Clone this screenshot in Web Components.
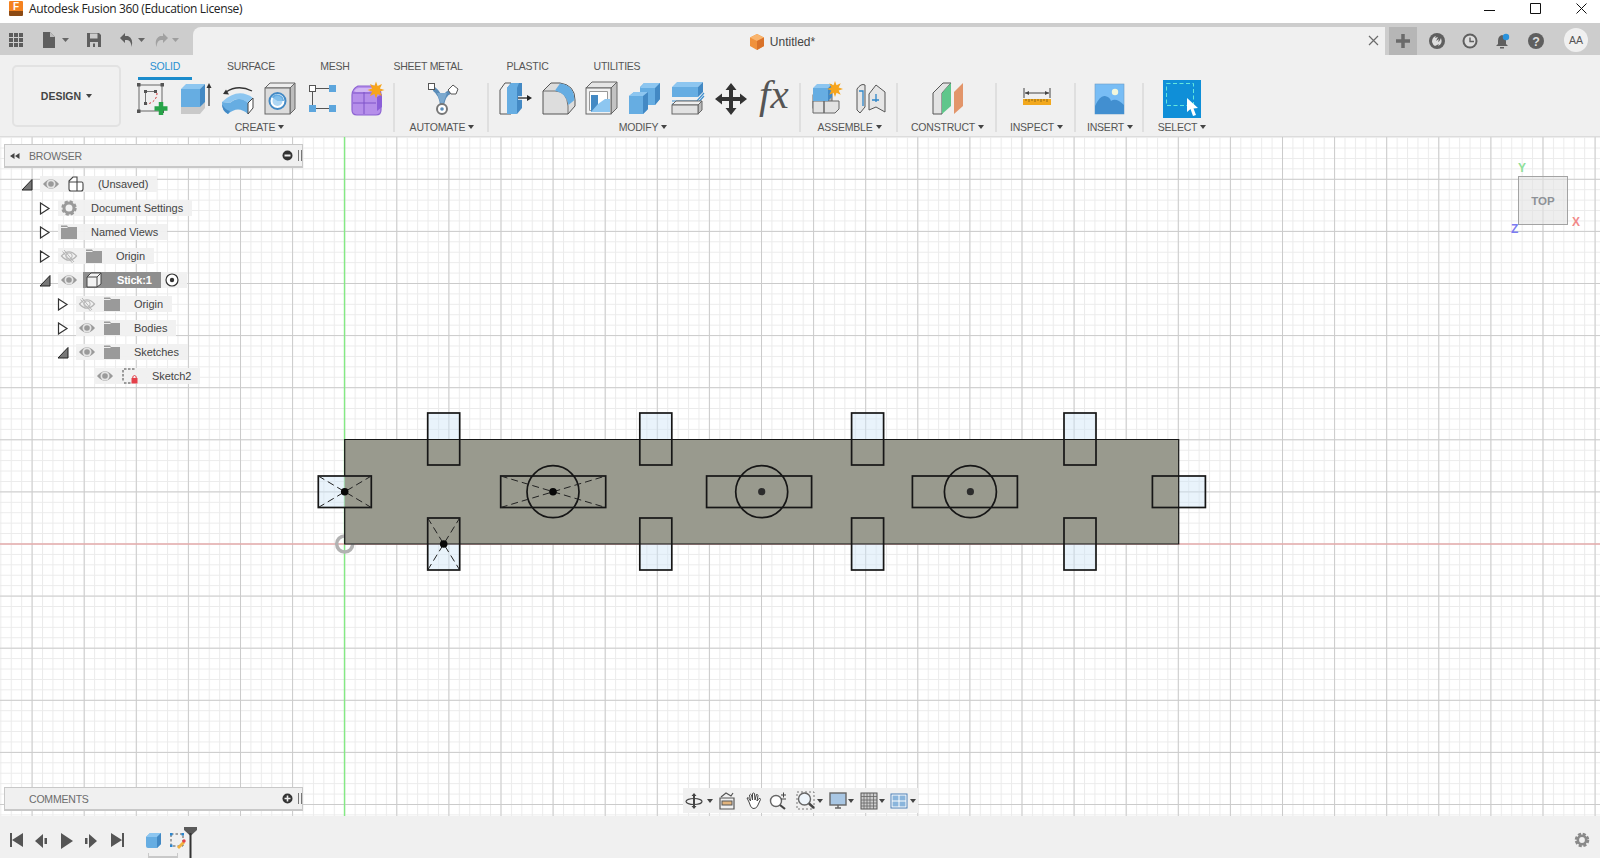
<!DOCTYPE html>
<html>
<head>
<meta charset="utf-8">
<title>Autodesk Fusion 360</title>
<style>
  html,body{ margin:0; padding:0; height:100%; overflow:hidden; background:#fff; }
</style>
</head>
<body>
<fusion-app></fusion-app>
<script>
const BLUE='#66ade2', BLUE_D='#4389c4', BLUE_L='#8dc6f0', EDGE='#555';
const cube=(x,y,w,h,d,front=BLUE,top=BLUE_L,side=BLUE_D,st='none')=>
  `<path fill="${top}" stroke="${st}" d="M${x} ${y}l${d} ${-d}h${w}l${-d} ${d}z"/><path fill="${side}" stroke="${st}" d="M${x+w} ${y}l${d} ${-d}v${h}l${-d} ${d}z"/><rect fill="${front}" stroke="${st}" x="${x}" y="${y}" width="${w}" height="${h}"/>`;
const star=(cx,cy,r)=>{let p='';for(let i=0;i<16;i++){const a=i*Math.PI/8,q=i%2?r*.5:r;p+=`${(cx+q*Math.cos(a)).toFixed(1)},${(cy+q*Math.sin(a)).toFixed(1)} `}return `<polygon points="${p}" fill="#f7a51c"/>`};

const ICONS={
  // ribbon, 38 x 38
  sketch:`<path d="M6 5H29V31H6Z" fill="none" stroke="#666"/><g fill="#555"><rect x="4" y="3" width="3.5" height="3.5"/><rect x="27.500" y="3" width="3.500" height="3.500"/><rect x="4" y="29.500" width="3.500" height="3.500"/><rect x="27.500" y="29.500" width="3.500" height="3.500"/><rect x="11" y="10" width="3" height="3"/><rect x="21" y="10" width="3" height="3"/><rect x="11" y="22" width="3" height="3"/></g><path d="M14 11.500H21M12.500 13V22" stroke="#777" fill="none"/><path d="M24 13C24 19 20 23 14 24" stroke="#c33" stroke-dasharray="2 2" fill="none"/><path d="M28 22V35M21.500 28.500H34.500" stroke="#27a348" stroke-width="4.500"/>`,
  extrude:`<path fill="#c9c9c9" d="M5 27H24L29 21V28L24 34H5Z"/>${cube(5,9,19,18,5)}<path d="M33 7V26" stroke="#333" stroke-width="1.200"/><path fill="#333" d="M33 3L30.500 8H35.500Z"/>`,
  revolve:`<path d="M7 12Q19 4 33 11" fill="none" stroke="#333" stroke-width="1.300"/><path fill="#333" d="M4 14L10 14.500 7 9.500Z"/><path fill="${BLUE_L}" d="M3 22Q19 7 34 18L29 23Q19 15 11 23Z"/><path fill="${BLUE}" d="M3 22L11 23Q20 15 29 23V34Q19 25 9 34 3 31 3 22Z"/><path fill="${BLUE_D}" d="M3 24Q3 31 9 34L11 31Q6 30 3 24Z"/><path fill="#fff" stroke="#444" d="M29 23L34 18V28L29 34Z"/>`,
  hole:`${cube(3,8,25,26,5,'#dcdcdc','#eee','#bdbdbd','#666')}<circle cx="15.500" cy="21" r="8" fill="#fff" stroke="${BLUE_D}" stroke-width="2"/><path d="M15.500 21L9.500 17A7 7 0 0 1 22 21Z" fill="${BLUE}"/><circle cx="15.500" cy="21" r="5" fill="${BLUE_L}" opacity=".7"/>`,
  pattern:`<path d="M11 8.500H24M7.500 12V25M11 28.500H24" stroke="#555"/><rect x="4.500" y="5.500" width="6" height="6" fill="#fff" stroke="#555"/><g fill="#5da6dd"><rect x="24" y="5" width="7" height="7"/><rect x="4" y="25" width="7" height="7"/><rect x="24" y="25" width="7" height="7"/></g>`,
  form:`<path fill="#b68fea" stroke="#8c62d2" stroke-width="1.200" d="M4 15Q4 9 10 6H26Q33 8 33 14V30Q33 35 28 35H9Q4 35 4 30Z"/><path fill="#d1b6f3" d="M6 11Q8 8 11 8H25L21 12H8Z"/><path stroke="#7f52c9" fill="none" d="M5 23H28M16 12V34M5 13H28"/><path fill="#8c5fd8" d="M29 17L34 14V27L29 31Z"/>${star(28,10,8.500)}`,
  automate:`<path d="M11 9Q18 14 19 25M27 12Q21 14 19 25" stroke="#5a8cb8" stroke-width="4" fill="none"/><path d="M14 13H24L20 24H18Z" fill="#7ba9cf"/><rect x="5.500" y="3.500" width="6" height="6" fill="#fff" stroke="#555"/><path d="M30 5L35 9 33 14H28L25 10Z" fill="#fff" stroke="#555"/><circle cx="19" cy="29" r="5" fill="#fff" stroke="#777" stroke-width="2"/><circle cx="19" cy="29" r="1.800" fill="#5a8cb8"/>`,
  presspull:`<path d="M3 10L8 3H14V34H3Z" fill="#f0f0f0" stroke="#555"/><path d="M10 8L14 3H25V28L20 34H10Z" fill="${BLUE_D}"/><path d="M10 8L14 3H22L20 8V34H10Z" fill="${BLUE}"/><path d="M21 18H31" stroke="#fff" stroke-width="3.500"/><path d="M21 18H30" stroke="#222" stroke-width="1.300"/><path d="M35 18L30 15V21Z" fill="#222"/>`,
  fillet:`<path d="M3 11L11 3H20Q35 5 35 20V26L28 34H3Z" fill="#ddd" stroke="#555"/><path d="M3 11H15Q27 11 28 26V34" fill="none" stroke="#555" stroke-width=".800"/><path d="M20 3.500Q34 5 34.500 20L28.500 25Q27 14 15 10.500Z" fill="${BLUE}"/>`,
  shell:`${cube(3,8,25,26,6,'#f2f2f2','#e6e6e6','#c3c3c3','#666')}<path d="M6.500 11.500H24.500V30.500H6.500Z" fill="#fff" stroke="#999"/><path d="M8 15H15V24H27V32H8Z" fill="${BLUE_D}"/><path d="M15 24L22 19H27V24Z" fill="${BLUE_L}"/><path d="M8 32L15 24H27V32Z" fill="${BLUE_L}"/>`,
  combine:`<path d="M3 16L8 12H14V7L18 3H34V19L29 25H22V29L17 34H3Z" fill="${BLUE}"/><path d="M14 8H30L34 3H18Z M3 16H18L22 12H8Z" fill="${BLUE_L}"/><path d="M29 8L34 3V19L29 25Z M17 16L22 12V29L17 34Z" fill="${BLUE_D}"/>`,
  offset:`${cube(3,7,26,10,5)}<path d="M3 21L28 21 35 13M3 24H28L35 16" fill="none" stroke="#3d8fd0" stroke-width="1.200"/>${cube(3,25,26,9,4,'#e2e2e2','#eee','#bbb','#666')}`,
  move:`<path fill="#333" d="M19 3L24.500 10H21V17H28V13.500L35 19 28 24.500V21H21V28H24.500L19 35 13.500 28H17V21H10V24.500L3 19 10 13.500V17H17V10H13.500Z"/>`,
  fx:`<text x="4" y="28" font-family="'Liberation Serif',serif" font-style="italic" font-size="41" letter-spacing="0" fill="#555">fx</text>`,
  component:`${cube(4,15,15,13,4,'#e2e2e2','#efefef','#bbb','#666')}<path d="M4 33V21H15V33ZM15 33V21H30V29L26 33Z" fill="#e2e2e2" stroke="#666"/>${cube(4,8,15,13,4)}${star(26,9,8)}`,
  joint:`<path d="M5 9Q9 3 13 5V27L8 33 5 30Z" fill="#e6e6e6" stroke="#555"/><path d="M7 11H11V26" stroke="#2f86c9" fill="none" stroke-width="1.300"/><path d="M24 5L33 12V32L24 27 17 30V14Z" fill="#e6e6e6" stroke="#555"/><path d="M24 14V22M20 20H27" stroke="#2f86c9" fill="none" stroke-width="1.300"/>`,
  plane:`<path d="M4 13L14 3H22L13 13V34H4Z" fill="#e3e3e3" stroke="#555"/><path d="M13 13L22 3V26L13 34Z" fill="#5fc68b"/><path d="M25 12L34 3V26L25 34Z" fill="#e2956a"/>`,
  measure:`<path d="M6 8V18M32 8V18M7 13H31" stroke="#444" fill="none"/><path d="M7 13L11 11V15ZM31 13L27 11V15Z" fill="#444"/><rect x="5" y="19" width="28" height="6" fill="#f2a81d"/><path d="M8 19v2M11 19v3M14 19v2M17 19v3M20 19v2M23 19v3M26 19v2M29 19v3" stroke="#7b5b12" stroke-width=".800"/>`,
  insert:`<rect x="4" y="4" width="29" height="30" fill="#78bdf5" stroke="#6c9dc7" stroke-width=".600"/><path d="M4 26Q9 15 14 16 19 17 20 21 25 17 33 25V34H4Z" fill="#428fd0"/><circle cx="24" cy="12" r="3.200" fill="#f2f7dc"/>`,
  select:`<rect width="38" height="38" fill="#0f8fd8"/><rect x="3.500" y="3.500" width="27" height="22" fill="none" stroke="#64e6dc" stroke-dasharray="4 2.500"/><path d="M24 18L24 32 27.500 29 30 36 33 35 30.500 28.500 35 28Z" fill="#fff"/>`,
  // quick access, 16 x 16
  apps:`<g fill="#5c5c5c"><rect x="1" y="1" width="4" height="4"/><rect x="6" y="1" width="4" height="4"/><rect x="11" y="1" width="4" height="4"/><rect x="1" y="6" width="4" height="4"/><rect x="6" y="6" width="4" height="4"/><rect x="11" y="6" width="4" height="4"/><rect x="1" y="11" width="4" height="4"/><rect x="6" y="11" width="4" height="4"/><rect x="11" y="11" width="4" height="4"/></g>`,
  file:`<path d="M2 0H9L14 5V16H2Z" fill="#5f5f5f"/><path d="M9 0V5H14Z" fill="#bdbdbd"/>`,
  save:`<path d="M1 1H13L15 3V15H1Z" fill="#5f5f5f"/><rect x="4" y="1.500" width="7.500" height="5" fill="#ccc"/><rect x="4" y="10" width="8" height="5" fill="#ccc"/><rect x="7" y="11.500" width="2" height="3.500" fill="#5f5f5f"/>`,
  undo:`<path d="M6 1L1 6 6 11V8H8Q12 8 12.500 15 15 7 9 4H6Z" fill="#5f5f5f"/>`,
  redo:`<path d="M10 1L15 6 10 11V8H8Q4 8 3.500 15 1 7 7 4H10Z" fill="#9a9a9a"/>`,
  caretdark:`<path d="M0 0H7L3.500 4Z" fill="#666"/>`,
  plus:`<path d="M8 1V15M1 8H15" stroke="#6b6b6b" stroke-width="3.500"/>`,
  online:`<circle cx="8" cy="8" r="8" fill="#5f5f5f"/><path d="M3 9Q3 4 7 3L6 5 9 4 7 8 10 6 9 9Q11 8 12 5 14 11 9 13L10 11 6 13Q4 12 3 9Z" fill="#ddd"/>`,
  clock:`<circle cx="8" cy="8" r="7.500" fill="#5f5f5f"/><circle cx="8" cy="8" r="5.500" fill="#ddd"/><path d="M8 4.500V8.500H12" stroke="#5f5f5f" stroke-width="1.400" fill="none"/>`,
  bell:`<path d="M7 2Q3 3 3 8V11L1 13H13L11 11V8Q11 3 7 2Z" fill="#5f5f5f"/><rect x="5" y="14" width="4" height="1.500" fill="#5f5f5f"/><circle cx="11" cy="4" r="3.200" fill="#2992dc"/>`,
  help:`<circle cx="8" cy="8" r="8" fill="#5f5f5f"/><text x="8" y="12.500" text-anchor="middle" font-family="'Liberation Sans',sans-serif" font-weight="700" font-size="12.500" fill="#ddd">?</text>`,
  doccube:`<path d="M8 0L15 3.500V12L8 16 1 12V3.500Z" fill="#f0913c"/><path d="M8 0L15 3.500 8 7 1 3.500Z" fill="#f9b46d"/><path d="M8 7L15 3.500V12L8 16Z" fill="#d9722a"/>`,
  // browser tree, 16 x 16
  eye:`<path d="M0 8Q8 -1.500 16 8 8 17.500 0 8Z" fill="#9a9a9a"/><circle cx="8" cy="8" r="4.500" fill="#e4e4e4"/><circle cx="8" cy="8" r="2.800" fill="#9a9a9a"/>`,
  eyeoff:`<path d="M.5 8Q8 -.5 15.500 8 8 16.500 .5 8Z" fill="none" stroke="#b5b5b5" stroke-width="1.200"/><circle cx="8" cy="8" r="3.200" fill="none" stroke="#b5b5b5"/><path d="M3 2L13 14M1.500 3.500L11.500 15" stroke="#b5b5b5" stroke-width="1"/>`,
  doc:`<path d="M1 5L5 1H9V6H14Q15 6 15 8V13Q15 15 13 15H3Q1 15 1 13ZM1 6H9V15" fill="#fff" stroke="#444" stroke-width="1.100"/>`,
  gear:`<circle cx="8" cy="8" r="6" fill="none" stroke="#9a9a9a" stroke-width="3.400" stroke-dasharray="2.900 1.800"/><circle cx="8" cy="8" r="5" fill="none" stroke="#9a9a9a" stroke-width="3"/>`,
  folder:`<path d="M0 1.500H6L7 3H16V15H0Z" fill="#9a9a9a"/><path d="M0 3.500H6.500" stroke="#eee"/>`,
  body:`<path d="M1 5L5 1H15V12L11 15H1Z" fill="#f2f2f2" stroke="#444"/><path d="M1 5H11V15M11 5L15 1" fill="none" stroke="#444"/>`,
  target:`<circle cx="7" cy="7" r="6" fill="#fff" stroke="#333" stroke-width="1.200"/><circle cx="7" cy="7" r="2.200" fill="#333"/>`,
  sketchlock:`<path d="M2 1H14M1 2V14M2 15H9" stroke="#444" stroke-dasharray="2.500 1.500" fill="none"/><rect x="9.500" y="10" width="6" height="5.500" fill="#e4404a"/><path d="M10.800 10V8.500Q12.500 6.500 14.200 8.500V10" fill="none" stroke="#e4404a"/>`,
  // timeline
  tl_first:`<path d="M1 1H3V15H1ZM14 1V15L3 8Z" fill="#555"/>`,
  tl_prev:`<path d="M9 1V15L1 8ZM10.500 5H13V11H10.500Z" fill="#555"/>`,
  tl_play:`<path d="M1 0L13 8 1 16Z" fill="#555"/>`,
  tl_next:`<path d="M5 1V15L13 8ZM1 5H3.500V11H1Z" fill="#555"/>`,
  tl_last:`<path d="M13 1H15V15H13ZM2 1V15L13 8Z" fill="#555"/>`,
  tl_cube:`<path d="M1 5L5 1H16V12L12 16H3Q1 16 1 14Z" fill="${BLUE}"/><path d="M1 5L5 1H16L12 5Z" fill="${BLUE_L}"/><path d="M12 5L16 1V12L12 16Z" fill="${BLUE_D}"/>`,
  tl_sketch:`<path d="M2 2H14V14H2Z" fill="none" stroke="#555" stroke-dasharray="2.500 2"/><g fill="#2a86cf"><rect x="1" y="1" width="2.500" height="2.500"/><rect x="12.500" y="1" width="2.500" height="2.500"/><rect x="1" y="12.500" width="2.500" height="2.500"/></g><path d="M8 15L14 9 16 11 10 17Z" fill="#f2b13d"/><circle cx="15" cy="9" r="1.700" fill="#e4404a"/>`,
  settings:`<circle cx="8" cy="8" r="5.500" fill="none" stroke="#8a8a8a" stroke-width="3.600" stroke-dasharray="2.800 1.520"/><circle cx="8" cy="8" r="4.200" fill="none" stroke="#8a8a8a" stroke-width="2.600"/>`,
  // nav bar
  orbit:`<path d="M9 1L11.500 4H10V14H11.500L9 17 6.500 14H8V4H6.500Z" fill="#444"/><ellipse cx="9" cy="9.500" rx="8" ry="3" fill="none" stroke="#444" stroke-width="1.200"/>`,
  look:`<path d="M2 6H16V17H2Z" fill="none" stroke="#555" stroke-width="1.200"/><rect x="4" y="9" width="10" height="4" fill="#e2b47d" stroke="#555"/><path d="M3 5L8 1 13 4 15 1" fill="none" stroke="#555" stroke-width="1.200"/>`,
  hand:`<path d="M4 10L2 6Q3 5 4.500 7L5.500 9 4.500 3Q5.500 1.500 6.500 3L7.500 8 7.500 1.500Q8.500 .5 9.500 1.500L10 8 11.500 2.500Q12.500 2 13 3.500L12 9 14 6.500Q15.500 6 15.500 7.500L12.500 14Q11 17 8 16.500 5.500 16 4 10Z" fill="#fff" stroke="#444" stroke-width="1"/>`,
  zoom:`<circle cx="7" cy="9" r="5.500" fill="#fff" stroke="#666" stroke-width="1.400"/><path d="M11 13L16 17" stroke="#444" stroke-width="2.200"/><path d="M12 3H17M14.500 .5V5.500M12 7H17" stroke="#444" stroke-width="1"/>`,
  fit:`<path d="M1 1H18V18H1Z" fill="none" stroke="#777" stroke-dasharray="2 2"/><circle cx="8.500" cy="8" r="6" fill="#eef5fb" stroke="#666" stroke-width="1.400"/><path d="M13 12.500L18 17" stroke="#444" stroke-width="2.400"/>`,
  display:`<rect x="1" y="1" width="16" height="12" fill="#a9c7e4" stroke="#666" stroke-width="1.400"/><path d="M6 16H12M9 13V16" stroke="#666" stroke-width="1.400"/>`,
  gridview:`<rect x="1" y="1" width="16" height="16" fill="#ccc" stroke="#555"/><path d="M4 1V17M7 1V17M10 1V17M13.500 1V17M1 4.500H17M1 8H17M1 11H17M1 14H17" stroke="#666" stroke-width=".800"/>`,
  viewports:`<rect x="1" y="2" width="16" height="14" fill="#fff" stroke="#4b7fb5"/><g fill="#8ab5dc"><rect x="2.500" y="3.500" width="6" height="5"/><rect x="9.500" y="3.500" width="6" height="5"/><rect x="2.500" y="9.500" width="6" height="5"/><rect x="9.500" y="9.500" width="6" height="5"/></g>`,
  back:`<path d="M4.500 1V7L0 4ZM9.500 1V7L5 4Z" fill="#444"/>`,
  minus:`<circle cx="5.500" cy="5.500" r="5" fill="#333"/><rect x="2.500" y="4.500" width="6" height="2" fill="#eee"/>`,
  plusc:`<circle cx="5.500" cy="5.500" r="5" fill="#333"/><path d="M2.500 5.500H8.500M5.500 2.500V8.500" stroke="#eee" stroke-width="1.600"/>`,
  grip:`<path d="M.5 0V11M3.500 0V11" stroke="#777" stroke-width="1"/>`,
  close:`<path d="M1 1L10 10M10 1L1 10" stroke="#6c6c6c" stroke-width="1.200"/>`,
};

class AppIcon extends HTMLElement {
  connectedCallback(){
    if (this.shadowRoot) return;
    const w = this.getAttribute('w') || 38, h = this.getAttribute('h') || w;
    const vb = this.getAttribute('vb') || `0 0 ${w} ${h}`;
    this.attachShadow({ mode:'open' }).innerHTML = `
      <style>:host{ display:block; flex:none; width:${w}px; height:${h}px; } svg{ display:block; overflow:visible; }</style>
      <svg width="${w}" height="${h}" viewBox="${vb}">${ICONS[this.getAttribute('name')] || ''}</svg>`;
  }
}

class TitleBar extends HTMLElement {
  constructor(){
    super();
    this.attachShadow({ mode:'open' }).innerHTML = `
      <style>
        :host{ display:flex; align-items:center; height:23px; box-sizing:border-box; padding-bottom:7px; background:#fff; flex:none; }
        .logo{ margin-left:9px; width:14px; height:15px; margin-right:6px; background:linear-gradient(#f58220 0 70%,#8c4a14 70%); border-radius:1px; color:#fff; font:700 10px/11px "Liberation Sans",sans-serif; text-align:center; }
        .t{ font:12px "Open Sans",sans-serif; color:#222; letter-spacing:-.35px; }
        .sp{ flex:1; }
        svg{ display:block; }
        .w{ width:46px; display:flex; justify-content:center; }
        .w:last-child{ margin-right:-4px; }
      </style>
      <div class="logo">F</div><div class="t">Autodesk Fusion 360 (Education License)</div><div class="sp"></div>
      <div class="w"><svg width="11" height="11"><path d="M0 7.500H11" stroke="#111"/></svg></div>
      <div class="w"><svg width="11" height="11"><path d="M.5 .5H10.500V10.500H.5Z" fill="none" stroke="#111"/></svg></div>
      <div class="w"><svg width="11" height="11"><path d="M.5 .5L10.500 10.500M10.500 .5L.5 10.500" stroke="#111"/></svg></div>`;
  }
}

class QuickBar extends HTMLElement {
  constructor(){
    super();
    this.attachShadow({ mode:'open' }).innerHTML = `
      <style>
        :host{ display:flex; height:32px; flex:none; background:#cdcdcd; box-sizing:border-box; padding-top:4px; }
        .left{ width:193px; flex:none; display:flex; align-items:center; height:28px; }
        .left app-icon{ margin-top:-2px; }
        .tab{ flex:1; background:#f0f0f0; border-radius:8px 0 0 0; display:flex; align-items:center; position:relative; justify-content:center; padding:1px 14px 0 0; gap:6px; font:12px "Liberation Sans",sans-serif; color:#444; }
        .x{ position:absolute; right:6px; top:8px; }
        .right{ width:215px; flex:none; display:flex; align-items:center; }
        .add{ margin-left:4px; width:28px; height:28px; background:#b6b6b6; display:flex; align-items:center; justify-content:center; }
        .av{ width:24px; height:24px; border-radius:50%; background:#f0f0f0; font:10.500px/24px "Liberation Sans",sans-serif; color:#555; text-align:center; margin:-3px 0 0 20px; }
      </style>
      <div class="left">
        <app-icon name="apps" w="16" style="margin-left:8px"></app-icon>
        <app-icon name="file" w="16" style="margin-left:17px"></app-icon>
        <app-icon name="caretdark" w="7" h="4" style="margin-left:5px"></app-icon>
        <app-icon name="save" w="16" style="margin-left:17px"></app-icon>
        <app-icon name="undo" w="16" style="margin-left:17px"></app-icon>
        <app-icon name="caretdark" w="7" h="4" style="margin-left:3px"></app-icon>
        <app-icon name="redo" w="16" style="margin-left:8px;opacity:.85"></app-icon>
        <app-icon name="caretdark" w="7" h="4" style="margin-left:3px;opacity:.45"></app-icon>
      </div>
      <div class="tab"><app-icon name="doccube" w="15" h="16"></app-icon><span>Untitled*</span>
        <app-icon class="x" name="close" w="11"></app-icon></div>
      <div class="right">
        <div class="add"><app-icon name="plus" w="16"></app-icon></div>
        <app-icon name="online" w="16" style="margin-left:12px"></app-icon>
        <app-icon name="clock" w="16" style="margin-left:17px"></app-icon>
        <app-icon name="bell" w="16" style="margin-left:17px"></app-icon>
        <app-icon name="help" w="16" style="margin-left:17px"></app-icon>
        <div class="av">AA</div>
      </div>`;
  }
}

class RibbonTab extends HTMLElement {
  static get observedAttributes(){ return ['w','active']; }
  constructor(){
    super();
    this.attachShadow({ mode:'open' }).innerHTML = `
      <style>
        :host{ display:flex; justify-content:center; box-sizing:border-box; height:25px; padding-top:5px; flex:none; font:10.500px/13px "Liberation Sans",sans-serif; color:#555; letter-spacing:-.25px; }
        :host([active]){ color:#2a8fd0; border-bottom:3px solid #1b8ccc; }
      </style><slot></slot>`;
  }
  attributeChangedCallback(){ this.style.width = (this.getAttribute('w') || 50) + 'px'; }
}

class ToolGroup extends HTMLElement {
  constructor(){
    super();
    this.attachShadow({ mode:'open' }).innerHTML = `
      <style>
        :host{ display:flex; flex-direction:column; align-items:center; box-sizing:border-box; height:54px; flex:none; position:relative; }
        :host(:not([last]))::after{ content:''; position:absolute; right:0; top:3px; bottom:2px; width:2px; background:#dfdfdf; }
        .icons{ display:flex; justify-content:center; height:40px; }
        .lab{ font:10.500px/14px "Liberation Sans",sans-serif; color:#555; letter-spacing:-.2px; display:flex; align-items:center; gap:3px; margin-right:var(--lab-shift,0); }
        .car{ width:0; height:0; border:3.500px solid transparent; border-top:4px solid #444; border-bottom:0; }
        ::slotted(app-icon){ margin:0 var(--tool-pad,2.500px); }
      </style>
      <div class="icons"><slot></slot></div>
      <div class="lab"><span class="t"></span><span class="car"></span></div>`;
  }
  connectedCallback(){
    this.shadowRoot.querySelector('.t').textContent = this.getAttribute('label');
    this.style.width = this.getAttribute('w') + 'px';
  }
}

class RibbonBar extends HTMLElement {
  constructor(){
    super();
    this.attachShadow({ mode:'open' }).innerHTML = `
      <style>
        :host{ display:flex; height:82px; flex:none; background:#f0f0f0; box-sizing:border-box; border-bottom:1px solid #dcdcdc; }
        .design{ margin:10px 9px 0 12px; width:109px; height:62px; box-sizing:border-box; border:2px solid #e2e2e2; border-radius:5px; display:flex; align-items:center; justify-content:center; gap:5px; font:700 10.500px "Liberation Sans",sans-serif; color:#444; flex:none; }
        .car{ width:0; height:0; border:3.500px solid transparent; border-top:4px solid #444; border-bottom:0; }
        .col{ display:flex; flex-direction:column; }
        .tabs{ display:flex; padding-left:8px; }
        .tools{ display:flex; }
      </style>
      <div class="design"><span>DESIGN</span><span class="car"></span></div>
      <div class="col">
        <div class="tabs">
          <ribbon-tab w="54" active>SOLID</ribbon-tab><ribbon-tab w="118">SURFACE</ribbon-tab><ribbon-tab w="50">MESH</ribbon-tab>
          <ribbon-tab w="136">SHEET METAL</ribbon-tab><ribbon-tab w="63">PLASTIC</ribbon-tab><ribbon-tab w="116">UTILITIES</ribbon-tab>
        </div>
        <div class="tools">
          <tool-group label="CREATE" w="265" style="padding-right:6px">
            <app-icon name="sketch"></app-icon><app-icon name="extrude"></app-icon><app-icon name="revolve"></app-icon>
            <app-icon name="hole"></app-icon><app-icon name="pattern"></app-icon><app-icon name="form"></app-icon>
          </tool-group>
          <tool-group label="AUTOMATE" w="94"><app-icon name="automate"></app-icon></tool-group>
          <tool-group label="MODIFY" w="312" style="--lab-shift:4px">
            <app-icon name="presspull"></app-icon><app-icon name="fillet"></app-icon><app-icon name="shell"></app-icon><app-icon name="combine"></app-icon>
            <app-icon name="offset"></app-icon><app-icon name="move"></app-icon><app-icon name="fx"></app-icon>
          </tool-group>
          <tool-group label="ASSEMBLE" w="97"><app-icon name="component"></app-icon><app-icon name="joint"></app-icon></tool-group>
          <tool-group label="CONSTRUCT" w="99"><app-icon name="plane"></app-icon></tool-group>
          <tool-group label="INSPECT" w="79"><app-icon name="measure"></app-icon></tool-group>
          <tool-group label="INSERT" w="68"><app-icon name="insert"></app-icon></tool-group>
          <tool-group label="SELECT" w="76" last><app-icon name="select"></app-icon></tool-group>
        </div>
      </div>`;
  }
}

class PanelHead extends HTMLElement {
  constructor(){
    super();
    this.attachShadow({ mode:'open' }).innerHTML = `
      <style>
        :host{ display:flex; align-items:center; box-sizing:border-box; width:299px; height:24px; background:#f0f0f0; border:1px solid #c8c8c8; border-bottom-width:2px; font:10.500px "Liberation Sans",sans-serif; color:#6c6c6c; letter-spacing:-.2px; }
        .back{ width:24px; padding-left:5px; box-sizing:border-box; flex:none; }
        .sp{ flex:1; }
        .st{ margin-right:5px; }
      </style>
      <div class="back"></div><slot></slot><div class="sp"></div>
      <div class="st"></div>
      <app-icon name="grip" w="4" h="11"></app-icon>`;
  }
  connectedCallback(){
    this.shadowRoot.querySelector('.st').innerHTML = `<app-icon name="${this.getAttribute('state')}" w="11"></app-icon>`;
    if (this.hasAttribute('back')) this.shadowRoot.querySelector('.back').innerHTML = '<app-icon name="back" w="10" h="8"></app-icon>';
  }
}

class TreeRow extends HTMLElement {
  constructor(){
    super();
    this.attachShadow({ mode:'open' }).innerHTML = `
      <style>
        :host{ display:flex; align-items:center; height:24px; font:11px "Liberation Sans",sans-serif; color:#444; letter-spacing:-.05px; }
        .tw{ width:18px; flex:none; margin-left:-1px; margin-right:1px; }
        .chip{ display:flex; align-items:center; height:16px; background:rgba(240,240,240,.95); padding:0 9px 0 3px; white-space:nowrap; }
        .eye{ margin-right:9px; }
        .ic{ margin-right:14px; }
        .hl{ display:flex; align-items:center; height:16px; background:#8e8e8e; color:#fff; font-weight:700; padding:0 8px 0 3px; margin-left:-3px; width:67px; letter-spacing:-.2px; }
        .hl .ic{ margin-right:15px; }
        .tg{ margin-left:4px; margin-right:-1px; }
        svg{ display:block; }
      </style>
      <div class="tw"></div><div class="chip"></div>`;
  }
  connectedCallback(){
    const a = n => this.getAttribute(n);
    const root = this.shadowRoot;
    this.style.paddingLeft = (22 + (+a('depth')) * 18) + 'px';
    const open = '<svg width="12" height="13"><path d="M1 12H11V1.500Z" fill="#777" stroke="#222"/></svg>';
    const shut = '<svg width="12" height="13"><path d="M1.500 1V12L10 6.500Z" fill="#fff" stroke="#333" stroke-width="1.200"/></svg>';
    const tw = a('twisty');
    if (tw) root.querySelector('.tw').innerHTML = tw === 'open' ? open : shut;
    const eye = a('eye') ? `<app-icon class="eye" name="${a('eye')}" w="16"></app-icon>` : '';
    const icon = `<app-icon class="ic" name="${a('icon')}" w="16"></app-icon>`;
    root.querySelector('.chip').innerHTML = a('active') !== null
      ? `${eye}<div class="hl">${icon}<span>${a('label')}</span></div><app-icon class="tg" name="target" w="14"></app-icon>`
      : `${eye}${icon}<span>${a('label')}</span>`;
  }
}

class BrowserPanel extends HTMLElement {
  constructor(){
    super();
    this.attachShadow({ mode:'open' }).innerHTML = `
      <style>:host{ display:block; position:absolute; left:4px; top:7px; } .tree{ margin:4px 0 0 -4px; }</style>
      <panel-head state="minus" back>BROWSER</panel-head>
      <div class="tree">
        <tree-row depth="0" twisty="open" eye="eye" icon="doc" label="(Unsaved)"></tree-row>
        <tree-row depth="1" twisty="shut" icon="gear" label="Document Settings"></tree-row>
        <tree-row depth="1" twisty="shut" icon="folder" label="Named Views"></tree-row>
        <tree-row depth="1" twisty="shut" eye="eyeoff" icon="folder" label="Origin"></tree-row>
        <tree-row depth="1" twisty="open" eye="eye" icon="body" label="Stick:1" active></tree-row>
        <tree-row depth="2" twisty="shut" eye="eyeoff" icon="folder" label="Origin"></tree-row>
        <tree-row depth="2" twisty="shut" eye="eye" icon="folder" label="Bodies"></tree-row>
        <tree-row depth="2" twisty="open" eye="eye" icon="folder" label="Sketches"></tree-row>
        <tree-row depth="3" eye="eye" icon="sketchlock" label="Sketch2"></tree-row>
      </div>`;
  }
}

class CommentsPanel extends HTMLElement {
  constructor(){
    super();
    this.attachShadow({ mode:'open' }).innerHTML = `
      <style>:host{ display:block; position:absolute; left:4px; bottom:5px; }</style>
      <panel-head state="plusc">COMMENTS</panel-head>`;
  }
}

class ViewCube extends HTMLElement {
  constructor(){
    super();
    this.attachShadow({ mode:'open' }).innerHTML = `
      <style>
        :host{ display:block; position:absolute; left:1510px; top:24px; width:76px; height:76px; }
        .f{ position:absolute; left:8px; top:15px; width:48px; height:47px; border:1px solid #a3a3a3; background:rgba(226,226,226,.6); display:flex; align-items:center; justify-content:center; font:700 11.500px "Liberation Sans",sans-serif; color:#8d9197; }
        span{ position:absolute; font:700 12px "Liberation Sans",sans-serif; }
      </style>
      <div class="f">TOP</div>
      <span style="left:8px;top:0;color:#8fe09a">Y</span>
      <span style="left:62px;top:54px;color:#f28a8a">X</span>
      <span style="left:1px;top:61px;color:#7c7cf2">Z</span>`;
  }
}

class NavBar extends HTMLElement {
  constructor(){
    super();
    this.attachShadow({ mode:'open' }).innerHTML = `
      <style>
        :host{ display:flex; align-items:center; position:absolute; left:683px; bottom:3px; height:25px; width:235px; background:#f0f0f0; box-sizing:border-box; }
        .c{ width:0; height:0; border:3px solid transparent; border-top:4px solid #444; border-bottom:0; flex:none; }
      </style>
      <app-icon name="orbit" w="18" style="margin-left:2px"></app-icon><span class="c" style="margin-left:4px"></span>
      <app-icon name="look" w="18" style="margin-left:5px"></app-icon>
      <app-icon name="hand" w="17" style="margin-left:8.500px"></app-icon>
      <app-icon name="zoom" w="18" style="margin-left:7.500px"></app-icon>
      <app-icon name="fit" w="19" style="margin-left:8.500px"></app-icon><span class="c" style="margin-left:2.500px"></span>
      <app-icon name="display" w="18" style="margin-left:6px"></app-icon><span class="c" style="margin-left:1px"></span>
      <app-icon name="gridview" w="18" style="margin-left:6px"></app-icon><span class="c" style="margin-left:1px"></span>
      <app-icon name="viewports" w="18" style="margin-left:5px"></app-icon><span class="c" style="margin-left:2px"></span>`;
  }
}

class CadCanvas extends HTMLElement {
  constructor(){
    super();
    const ink='#161616';
    let tabs='', lines='';
    const X=[427.700,639.800,851.600,1064];
    X.forEach(x=>{
      tabs+=`<rect x="${x}" y="413" width="32" height="52" fill="#cfe4f6" fill-opacity=".45"/><rect x="${x}" y="518" width="32" height="52" fill="#cfe4f6" fill-opacity=".45"/>`;
      lines+=`<rect x="${x}" y="413" width="32" height="52"/><rect x="${x}" y="518" width="32" height="52"/>`;
    });
    const hs=[[500.700,553],[706.600,761.700],[912.400,970.400]];
    hs.forEach(([x,c])=>{ lines+=`<rect x="${x}" y="476" width="105" height="31.500"/><circle cx="${c}" cy="491.700" r="26" fill="none"/>`; });
    const dash=(x1,y1,x2,y2)=>`<path d="M${x1} ${y1}L${x2} ${y2}" stroke="#222" stroke-width="1" stroke-dasharray="7 4" fill="none"/>`;
    this.attachShadow({ mode:'open' }).innerHTML = `
      <style>
        :host{ display:block; flex:1; position:relative; overflow:hidden; background:#fff; }
        svg.scene{ position:absolute; inset:0; display:block; }
      </style>
      <svg class="scene" width="1600" height="679" viewBox="0 137 1600 679">
        <defs>
          <pattern id="g" patternUnits="userSpaceOnUse" x="344.200" y="543.500" width="10.420" height="10.420">
            <path d="M.5 0V10.420M0 .5H10.420" stroke="#ebebeb" stroke-width="1" fill="none"/>
          </pattern>
          <pattern id="G" patternUnits="userSpaceOnUse" x="344.200" y="543.500" width="52.100" height="52.100">
            <path d="M.5 0V52.100M0 .5H52.100" stroke="#cbcbcb" stroke-width="1" fill="none"/>
          </pattern>
        </defs>
        <rect x="0" y="137" width="1600" height="679" fill="url(#g)"/>
        <rect x="0" y="137" width="1600" height="679" fill="url(#G)"/>
        <path d="M344.500 137V816" stroke="#84ea84" stroke-width="1.400"/>
        <path d="M0 544H1600" stroke="#f09a9a" stroke-width="1"/>
        <circle cx="344.700" cy="544" r="8" fill="none" stroke="#b2b2b2" stroke-width="3.500"/>
        ${tabs}
        <rect x="318.300" y="476" width="53" height="31.500" fill="#cfe4f6" fill-opacity=".45"/>
        <rect x="1152.400" y="476" width="53" height="31.500" fill="#cfe4f6" fill-opacity=".45"/>
        <rect x="344.700" y="439.500" width="834" height="104.500" fill="#999a8e"/>
        <path d="M344.700 476V439.500H1178.700V544H344.700V507.500" fill="none" stroke="${ink}" stroke-width="1.200"/>
        <g fill="none" stroke="${ink}" stroke-width="1.700">
          ${lines}
          <rect x="318.300" y="476" width="53" height="31.500"/>
          <rect x="1152.400" y="476" width="53" height="31.500"/>
        </g>
        ${dash(318.300,476,371.300,507.500)}${dash(318.300,507.500,371.300,476)}
        ${dash(500.700,476,605.700,507.500)}${dash(500.700,507.500,605.700,476)}
        ${dash(427.700,518,459.700,570)}${dash(427.700,570,459.700,518)}
        <g fill="#080808"><circle cx="344.700" cy="491.700" r="3.800"/><circle cx="553" cy="491.700" r="3.800"/><circle cx="443.700" cy="544" r="3.800"/></g>
        <g fill="#2c2c2c"><circle cx="761.700" cy="491.700" r="3.600"/><circle cx="970.400" cy="491.700" r="3.600"/></g>
      </svg>
      <browser-panel></browser-panel>
      <comments-panel></comments-panel>
      <view-cube></view-cube>
      <nav-bar></nav-bar>`;
  }
}

class TimelineBar extends HTMLElement {
  constructor(){
    super();
    this.attachShadow({ mode:'open' }).innerHTML = `
      <style>
        :host{ display:flex; align-items:center; height:42px; flex:none; background:#f0f0f0; box-sizing:border-box; padding-top:6px; position:relative; }
        .sp{ flex:1; }
        .mark{ position:absolute; left:184px; top:11px; width:13px; height:31px; }
        .br{ position:absolute; left:148px; bottom:0; width:30px; height:5px; border:solid #c8c8c8; border-width:0 1px 0 1px; box-sizing:border-box; }
        .br::after{ content:''; position:absolute; left:-1px; right:-1px; bottom:0; height:2px; background:#c8c8c8; }
      </style>
      <app-icon name="tl_first" w="16" style="margin-left:9px"></app-icon>
      <app-icon name="tl_prev" w="14" style="margin-left:9px"></app-icon>
      <app-icon name="tl_play" w="14" style="margin-left:12px"></app-icon>
      <app-icon name="tl_next" w="14" style="margin-left:10px"></app-icon>
      <app-icon name="tl_last" w="16" style="margin-left:11px"></app-icon>
      <app-icon name="tl_cube" w="17" style="margin-left:20px"></app-icon>
      <app-icon name="tl_sketch" w="17" style="margin-left:7px"></app-icon>
      <div class="sp"></div>
      <app-icon name="settings" w="16" style="margin-right:10px"></app-icon>
      <div class="br"></div>
      <svg class="mark" viewBox="0 0 13 31"><path d="M0 0H13V3L6.500 9 0 3Z" fill="#5a5a5a"/><path d="M6.500 6V31" stroke="#333" stroke-width="2"/></svg>`;
  }
}

class FusionApp extends HTMLElement {
  constructor(){
    super();
    this.attachShadow({ mode:'open' }).innerHTML = `
      <style>:host{ display:flex; flex-direction:column; width:1600px; height:858px; overflow:hidden; }</style>
      <title-bar></title-bar><quick-bar></quick-bar><ribbon-bar></ribbon-bar><cad-canvas></cad-canvas><timeline-bar></timeline-bar>`;
  }
}

[['app-icon',AppIcon],['title-bar',TitleBar],['quick-bar',QuickBar],['ribbon-tab',RibbonTab],['tool-group',ToolGroup],['ribbon-bar',RibbonBar],
 ['panel-head',PanelHead],['tree-row',TreeRow],['browser-panel',BrowserPanel],['comments-panel',CommentsPanel],['view-cube',ViewCube],
 ['nav-bar',NavBar],['cad-canvas',CadCanvas],['timeline-bar',TimelineBar],['fusion-app',FusionApp]
].forEach(([n,c])=>customElements.define(n,c));
</script>
</body>
</html>
